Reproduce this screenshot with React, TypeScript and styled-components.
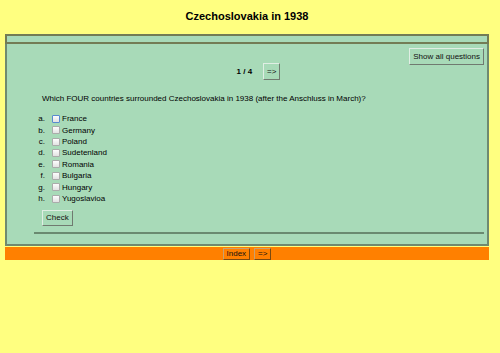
import React from 'react';
import styled, { createGlobalStyle } from 'styled-components';

const GlobalStyle = createGlobalStyle`
  body {
    margin: 0;
    background: #ffff80;
    font-family: "Liberation Sans", Arial, sans-serif;
    color: #000;
  }
`;

const Page = styled.div`
  width: 484px;
  margin-left: 5px;
  padding-top: 8px;
`;

const Title = styled.h1`
  margin: 0;
  height: 26px;
  font-size: 11px;
  font-weight: bold;
  text-align: center;
  line-height: 16px;
`;

const TopStrip = styled.div`
  height: 6px;
  background: #a8dab8;
  border: 2px solid #737c55;
`;

const Panel = styled.div`
  height: 197px;
  background: #a8dab8;
  border: 2px solid #6f8a70;
  border-top: none;
  display: flex;
  flex-direction: column;
  padding: 3px 3px 0 0;
  box-sizing: content-box;
`;

const Button = styled.button<{ $tone?: 'green' | 'orange'; $h?: number }>`
  font-family: "Liberation Sans", Arial, sans-serif;
  font-size: 8px;
  color: #111;
  padding: 0 3px;
  margin: 0;
  height: ${({ $h }) => $h ?? 17}px;
  background: ${({ $tone }) => ($tone === 'orange' ? '#ff8000' : '#a8dab8')};
  border: 1px solid;
  border-color: ${({ $tone }) =>
    $tone === 'orange'
      ? '#c8a070 #7a4a10 #7a4a10 #c8a070'
      : '#e0eee4 #707a70 #707a70 #e0eee4'};
  cursor: pointer;
`;

const TopRow = styled.div`
  display: flex;
  justify-content: flex-end;
  padding-top: 1px;
`;

const Pager = styled.div`
  display: flex;
  justify-content: center;
  align-items: center;
  gap: 11px;
  margin-top: -2px;
  padding-left: 26px;
  font-size: 8px;
  font-weight: bold;
`;

const Question = styled.p`
  margin: 13px 0 0 35px;
  font-size: 8px;
  line-height: 12px;
`;

const Options = styled.ol`
  list-style: none;
  margin: 8px 0 0 0;
  padding: 0;
`;

const Option = styled.li`
  display: flex;
  align-items: center;
  height: 11.43px;
  font-size: 8px;
`;

const Letter = styled.span`
  width: 45px;
  text-align: right;
  padding-right: 7px;
  box-sizing: border-box;
`;

const Box = styled.span<{ $focus?: boolean }>`
  width: 6px;
  height: 6px;
  margin-right: 2px;
  background: linear-gradient(#fdfdfd, #e2e2e2);
  border: 1px solid ${({ $focus }) => ($focus ? '#5a8ad0' : '#ababab')};
  border-radius: 1px;
  flex-shrink: 0;
`;

const CheckRow = styled.div`
  margin: 2px 0 0 35px;
`;

const Rule = styled.hr`
  margin: 6px 0 0 27px;
  height: 0;
  border: none;
  border-top: 2px solid #6a8a70;
`;

const Footer = styled.div`
  margin-top: 1px;
  height: 13px;
  background: #ff8000;
  display: flex;
  justify-content: center;
  align-items: center;
  gap: 4px;
`;

const answers = [
  'France',
  'Germany',
  'Poland',
  'Sudetenland',
  'Romania',
  'Bulgaria',
  'Hungary',
  'Yugoslavioa',
];

export default function App() {
  return (
    <>
      <GlobalStyle />
      <Page>
        <Title>Czechoslovakia in 1938</Title>
        <TopStrip />
        <Panel>
          <TopRow>
            <Button>Show all questions</Button>
          </TopRow>
          <Pager>
            <span>1 / 4</span>
            <Button>=&gt;</Button>
          </Pager>
          <Question>
            Which FOUR countries surrounded Czechoslovakia in 1938 (after the Anschluss in March)?
          </Question>
          <Options>
            {answers.map((a, i) => (
              <Option key={a}>
                <Letter>{String.fromCharCode(97 + i)}.</Letter>
                <Box $focus={i === 0} />
                <span>{a}</span>
              </Option>
            ))}
          </Options>
          <CheckRow>
            <Button $h={16}>Check</Button>
          </CheckRow>
          <Rule />
        </Panel>
        <Footer>
          <Button $tone="orange" $h={12}>Index</Button>
          <Button $tone="orange" $h={12}>=&gt;</Button>
        </Footer>
      </Page>
    </>
  );
}
